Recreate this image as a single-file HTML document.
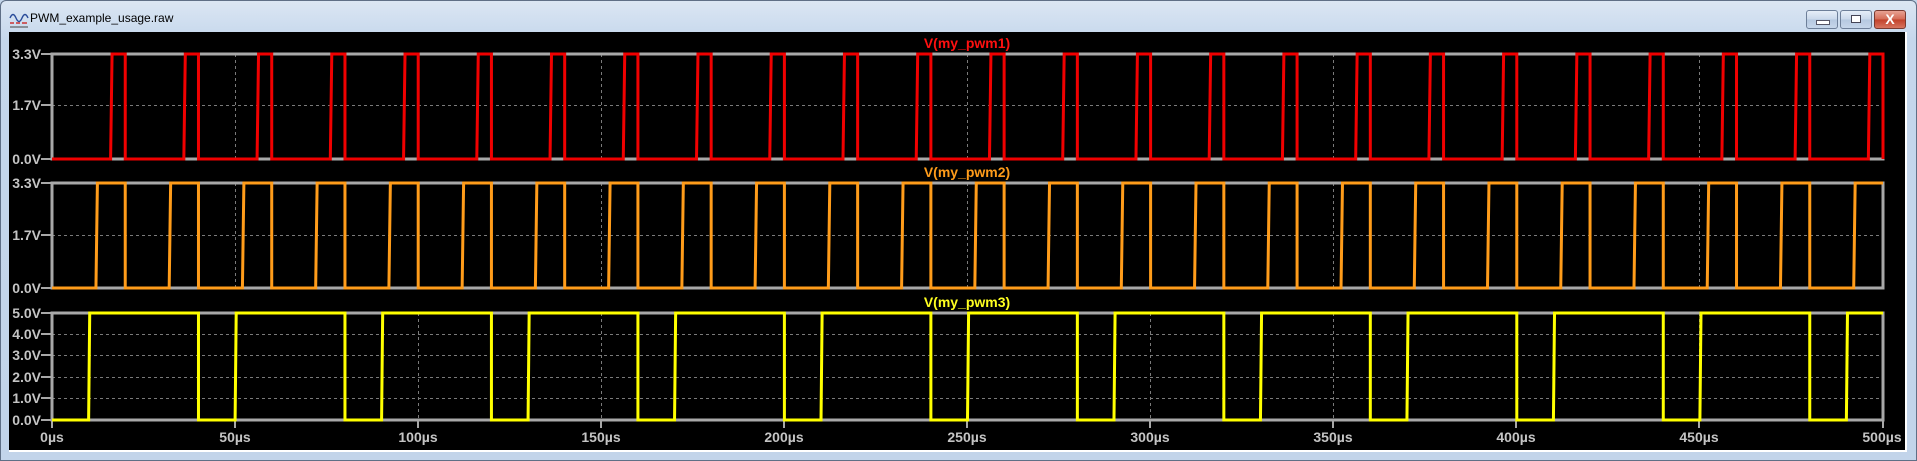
<!DOCTYPE html>
<html><head><meta charset="utf-8">
<style>
html,body{margin:0;padding:0;width:1917px;height:461px;overflow:hidden;background:#c3d5ea;}
.win{position:absolute;left:0;top:0;width:1915px;height:459px;border:1px solid #5f6f86;border-radius:6px 6px 0 0;background:linear-gradient(#dbe6f3,#c5d7ec 40px,#c2d4ea);}
.title{position:absolute;left:30px;top:11px;font:12px "Liberation Sans",sans-serif;color:#000;}
.btn{position:absolute;top:10px;height:17px;border:1px solid #6d7f99;border-radius:3px;background:linear-gradient(#e6eef8,#c8d7ea 50%,#b5c8e0 51%,#c6d6ea);}
.close{background:linear-gradient(#e8a293,#d46a55 50%,#c2412a 51%,#d7745f);border-color:#7a3a30;}
.plot{position:absolute;left:9px;top:32px;width:1896px;height:418px;background:#000;border-right:2px solid #fff;border-bottom:2px solid #fff;}
svg{position:absolute;left:0;top:0;}
</style></head><body>
<div class="win"></div>
<svg width="20" height="20" style="left:9px;top:9px" viewBox="0 0 20 20">
<path d="M1,9 q3,-7 6,0 t6,0 t6,0" stroke="#2a4c9a" stroke-width="1.4" fill="none"/>
<path d="M1,14 h4 M7,14 h4 M13,14 h5" stroke="#c33" stroke-width="1.4"/>
<path d="M1,18 h18" stroke="#444" stroke-width="1"/>
</svg>
<div class="title">PWM_example_usage.raw</div>
<div class="btn" style="left:1806px;width:30px"><div style="position:absolute;left:9px;top:9px;width:12px;height:3px;background:#fff;border:1px solid #556"></div></div>
<div class="btn" style="left:1840px;width:30px"><div style="position:absolute;left:10px;top:4px;width:8px;height:6px;border:1px solid #445;background:#fff"></div></div>
<div class="btn close" style="left:1874px;width:30px;font:bold 14px 'Liberation Sans',sans-serif;color:#fff;text-align:center;line-height:17px">X</div>
<div class="plot"></div>
<svg width="1917" height="461" font-family="Liberation Sans, sans-serif" font-weight="bold" font-size="14">
<g stroke="#7a7a7a" stroke-width="1" stroke-dasharray="3,3">
<path d="M235.5,54V159M418.5,54V159M601.5,54V159M784.5,54V159M967.5,54V159M1150.5,54V159M1333.5,54V159M1516.5,54V159M1699.5,54V159"/>
<path d="M235.5,183V288M418.5,183V288M601.5,183V288M784.5,183V288M967.5,183V288M1150.5,183V288M1333.5,183V288M1516.5,183V288M1699.5,183V288"/>
<path d="M235.5,313V420M418.5,313V420M601.5,313V420M784.5,313V420M967.5,313V420M1150.5,313V420M1333.5,313V420M1516.5,313V420M1699.5,313V420"/>
<path d="M52,105.5H1883M52,235.5H1883M52,334.5H1883M52,355.5H1883M52,377.5H1883M52,398.5H1883"/>
</g>
<g stroke="#a8a8a8" stroke-width="3" fill="none">
<rect x="52" y="54" width="1831" height="105"/>
<rect x="52" y="183" width="1831" height="105"/>
<rect x="52" y="313" width="1831" height="107"/>
</g>
<g stroke="#a8a8a8" stroke-width="2">
<path d="M41,54H52M41,105H52M41,159H52M41,183H52M41,235H52M41,288H52M41,313H52M41,334H52M41,355H52M41,377H52M41,398H52M41,420H52"/>
<path d="M52,420V428M235,420V428M418,420V428M601,420V428M784,420V428M967,420V428M1150,420V428M1333,420V428M1516,420V428M1699,420V428M1883,420V428"/>
</g>
<g fill="#c4c4c4" text-anchor="end">
<text x="41" y="59">3.3V</text><text x="41" y="110">1.7V</text><text x="41" y="164">0.0V</text>
<text x="41" y="188">3.3V</text><text x="41" y="240">1.7V</text><text x="41" y="293">0.0V</text>
<text x="41" y="318">5.0V</text><text x="41" y="339">4.0V</text><text x="41" y="360">3.0V</text><text x="41" y="382">2.0V</text><text x="41" y="403">1.0V</text><text x="41" y="425">0.0V</text>
</g>
<g fill="#c4c4c4" text-anchor="middle">
<text x="52" y="442">0µs</text><text x="235" y="442">50µs</text><text x="418" y="442">100µs</text><text x="601" y="442">150µs</text><text x="784" y="442">200µs</text><text x="967" y="442">250µs</text><text x="1150" y="442">300µs</text><text x="1333" y="442">350µs</text><text x="1516" y="442">400µs</text><text x="1699" y="442">450µs</text><text x="1882" y="442">500µs</text>
</g>
<g text-anchor="middle">
<text x="967" y="48" fill="#ff1010">V(my_pwm1)</text>
<text x="967" y="177" fill="#ff9c1a">V(my_pwm2)</text>
<text x="967" y="307" fill="#ffff20">V(my_pwm3)</text>
</g>
<g fill="none" stroke-width="3" stroke-linejoin="miter">
<path transform="translate(52,159) scale(3.662,-105)" vector-effect="non-scaling-stroke" stroke="#f00000"
d="M0,0 h16 l0.4,1 h3.6 v-1 h16 l0.4,1 h3.6 v-1 h16 l0.4,1 h3.6 v-1 h16 l0.4,1 h3.6 v-1 h16 l0.4,1 h3.6 v-1
h16 l0.4,1 h3.6 v-1 h16 l0.4,1 h3.6 v-1 h16 l0.4,1 h3.6 v-1 h16 l0.4,1 h3.6 v-1 h16 l0.4,1 h3.6 v-1
h16 l0.4,1 h3.6 v-1 h16 l0.4,1 h3.6 v-1 h16 l0.4,1 h3.6 v-1 h16 l0.4,1 h3.6 v-1 h16 l0.4,1 h3.6 v-1
h16 l0.4,1 h3.6 v-1 h16 l0.4,1 h3.6 v-1 h16 l0.4,1 h3.6 v-1 h16 l0.4,1 h3.6 v-1 h16 l0.4,1 h3.6 v-1
h16 l0.4,1 h3.6 v-1 h16 l0.4,1 h3.6 v-1 h16 l0.4,1 h3.6 v-1 h16 l0.4,1 h3.6 v-1 h16 l0.4,1 h3.6 v-1"/>
<path transform="translate(52,288) scale(3.662,-105)" vector-effect="non-scaling-stroke" stroke="#ff9c1a"
d="M0,0 h12 l0.4,1 h7.6 v-1 h12 l0.4,1 h7.6 v-1 h12 l0.4,1 h7.6 v-1 h12 l0.4,1 h7.6 v-1 h12 l0.4,1 h7.6 v-1
h12 l0.4,1 h7.6 v-1 h12 l0.4,1 h7.6 v-1 h12 l0.4,1 h7.6 v-1 h12 l0.4,1 h7.6 v-1 h12 l0.4,1 h7.6 v-1
h12 l0.4,1 h7.6 v-1 h12 l0.4,1 h7.6 v-1 h12 l0.4,1 h7.6 v-1 h12 l0.4,1 h7.6 v-1 h12 l0.4,1 h7.6 v-1
h12 l0.4,1 h7.6 v-1 h12 l0.4,1 h7.6 v-1 h12 l0.4,1 h7.6 v-1 h12 l0.4,1 h7.6 v-1 h12 l0.4,1 h7.6 v-1
h12 l0.4,1 h7.6 v-1 h12 l0.4,1 h7.6 v-1 h12 l0.4,1 h7.6 v-1 h12 l0.4,1 h7.6 v-1 h12 l0.4,1 h7.6"/>
<path transform="translate(52,420) scale(3.662,-107)" vector-effect="non-scaling-stroke" stroke="#ffff00"
d="M0,0 h10 l0.3,1 h29.7 v-1 h10 l0.3,1 h29.7 v-1 h10 l0.3,1 h29.7 v-1 h10 l0.3,1 h29.7 v-1
h10 l0.3,1 h29.7 v-1 h10 l0.3,1 h29.7 v-1 h10 l0.3,1 h29.7 v-1 h10 l0.3,1 h29.7 v-1
h10 l0.3,1 h29.7 v-1 h10 l0.3,1 h29.7 v-1 h10 l0.3,1 h29.7 v-1 h10 l0.3,1 h29.7 v-1 h10 l0.3,1 h9.7"/>
</g>
</svg>
</body></html>
